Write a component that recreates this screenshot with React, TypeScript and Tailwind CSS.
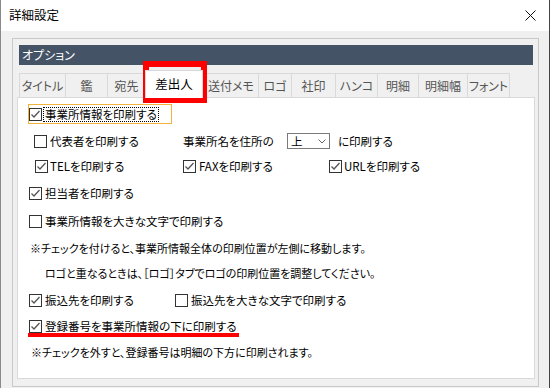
import React from "react";

// Casilla de verificacion al estilo Windows
function Check({ on }: { on?: boolean }) {
  return (
    <span className="flex h-[13px] w-[13px] shrink-0 items-center justify-center border border-[#333] bg-white">
      {on && (
        <svg width="11" height="11" viewBox="0 0 11 11">
          <path d="M1.5 5.5 L4 8 L9.5 2" fill="none" stroke="#555" strokeWidth="1.3" />
        </svg>
      )}
    </span>
  );
}

const tabs = [
  { label: "タイトル", w: "w-[46px]" },
  { label: "鑑", w: "w-[42px]" },
  { label: "宛先", w: "w-[38px]" },
  { label: "差出人", w: "w-[58px]", active: true },
  { label: "送付メモ", w: "w-[55px]" },
  { label: "ロゴ", w: "w-[33px]" },
  { label: "社印", w: "w-[44px]" },
  { label: "ハンコ", w: "w-[42px]" },
  { label: "明細", w: "w-[41px]" },
  { label: "明細幅", w: "w-[49px]" },
  { label: "フォント", w: "w-[43px]", last: true },
];

export default function App() {
  return (
    <div className="relative h-[388px] w-[550px] overflow-hidden border-x border-l-[#8a8a8a] border-r-[#444] bg-[#f0f0f0] text-[12px] text-black [font-family:'Noto_Sans_CJK_JP',sans-serif] [font-feature-settings:'palt']">
      {/* Barra de titulo */}
      <div className="flex h-[31px] items-center justify-between bg-white pl-[8px] pr-[13px]">
        <span className="text-[12.5px]">詳細設定</span>
        <svg width="11" height="11" viewBox="0 0 11 11">
          <path d="M0.5 0.5 L10.5 10.5 M10.5 0.5 L0.5 10.5" stroke="#111" strokeWidth="1" />
        </svg>
      </div>

      <div className="ml-[11px] mr-[10px] pt-[7px]">
        {/* Caja de grupo */}
        <div className="h-[349px] border border-[#c9c9c9]">
          <div className="mx-[5px] ml-[6px] mt-[6px] flex h-[20px] items-center bg-[#445466] pl-[3px] text-white">
            オプション
          </div>

          {/* Pestanas */}
          <div className="ml-[6px] mt-[5px] flex h-[27px] items-end">
            {tabs.map((t) =>
              t.active ? (
                <div
                  key={t.label}
                  className={`relative z-10 -mb-px flex h-[28px] ${t.w} items-center justify-center border-x border-t border-[#d9d9d9] bg-white text-[12.5px] text-black`}
                >
                  {t.label}
                </div>
              ) : (
                <div
                  key={t.label}
                  className={`flex h-[24px] ${t.w} items-center justify-center border-l border-t border-[#d9d9d9] text-[#555] ${t.last ? "border-r" : ""}`}
                >
                  {t.label}
                </div>
              )
            )}
          </div>

          {/* Panel de contenido */}
          <div className="ml-[4px] mr-[3px] flex h-[282px] flex-col border border-[#d9d9d9] bg-white pt-[6px] text-[11.5px] leading-[20px]">
            <div className="ml-[10px] flex h-[20px] w-[144px] items-center border border-[#f2b23c]">
              <Check on />
              <span className="ml-[1px] border border-dotted border-black px-[1px] leading-[13px]">事業所情報を印刷する</span>
            </div>

            <div className="mt-[7px] flex h-[20px] items-center pl-[16px]">
              <div className="flex w-[149px] items-center gap-[3px]">
                <Check />
                <span>代表者を印刷する</span>
              </div>
              <span className="w-[104px]">事業所名を住所の</span>
              <div className="flex h-[16px] w-[43px] items-center justify-between border border-[#7a7a7a] bg-white pl-[3px] pr-[3px]">
                <span className="leading-[14px]">上</span>
                <svg width="8" height="5" viewBox="0 0 8 5">
                  <path d="M0.5 0.5 L4 4 L7.5 0.5" fill="none" stroke="#666" strokeWidth="1" />
                </svg>
              </div>
              <span className="ml-[8px]">に印刷する</span>
            </div>

            <div className="mt-[5px] flex h-[20px] items-center pl-[17px]">
              <div className="flex w-[148px] items-center gap-[2px]">
                <Check on />
                <span>TELを印刷する</span>
              </div>
              <div className="flex w-[146px] items-center gap-[3px]">
                <Check on />
                <span>FAXを印刷する</span>
              </div>
              <div className="flex items-center gap-[2px]">
                <Check on />
                <span>URLを印刷する</span>
              </div>
            </div>

            <div className="mt-[7px] flex h-[20px] items-center gap-[3px] pl-[11px]">
              <Check on />
              <span>担当者を印刷する</span>
            </div>

            <div className="mt-[8px] flex h-[20px] items-center gap-[3px] pl-[11px]">
              <Check />
              <span>事業所情報を大きな文字で印刷する</span>
            </div>

            <div className="mt-[7px] h-[20px] pl-[12px] text-[11px]">
              ※チェックを付けると、事業所情報全体の印刷位置が左側に移動します。
            </div>
            <div className="mt-[5px] h-[20px] pl-[27px] text-[11px]">
              ロゴと重なるときは、［ロゴ］タブでロゴの印刷位置を調整してください。
            </div>

            <div className="mt-[7px] flex h-[20px] items-center pl-[11px]">
              <div className="flex w-[146px] items-center gap-[3px]">
                <Check on />
                <span>振込先を印刷する</span>
              </div>
              <div className="flex items-center gap-[3px]">
                <Check />
                <span>振込先を大きな文字で印刷する</span>
              </div>
            </div>

            <div className="mt-[6px] flex h-[20px] items-center gap-[3px] pl-[11px]">
              <Check on />
              <span>登録番号を事業所情報の下に印刷する</span>
            </div>

            <div className="mt-[6px] h-[20px] pl-[13px] text-[11px]">
              ※チェックを外すと、登録番号は明細の下方に印刷されます。
            </div>
          </div>
        </div>
      </div>

      {/* Anotaciones en rojo */}
      <div className="absolute left-[142px] top-[61px] h-[42px] w-[64px] border-[6px] border-[#ff0000]" />
      <div className="absolute left-[27px] top-[333px] h-[4px] w-[211px] bg-[#ff0000]" />
    </div>
  );
}
